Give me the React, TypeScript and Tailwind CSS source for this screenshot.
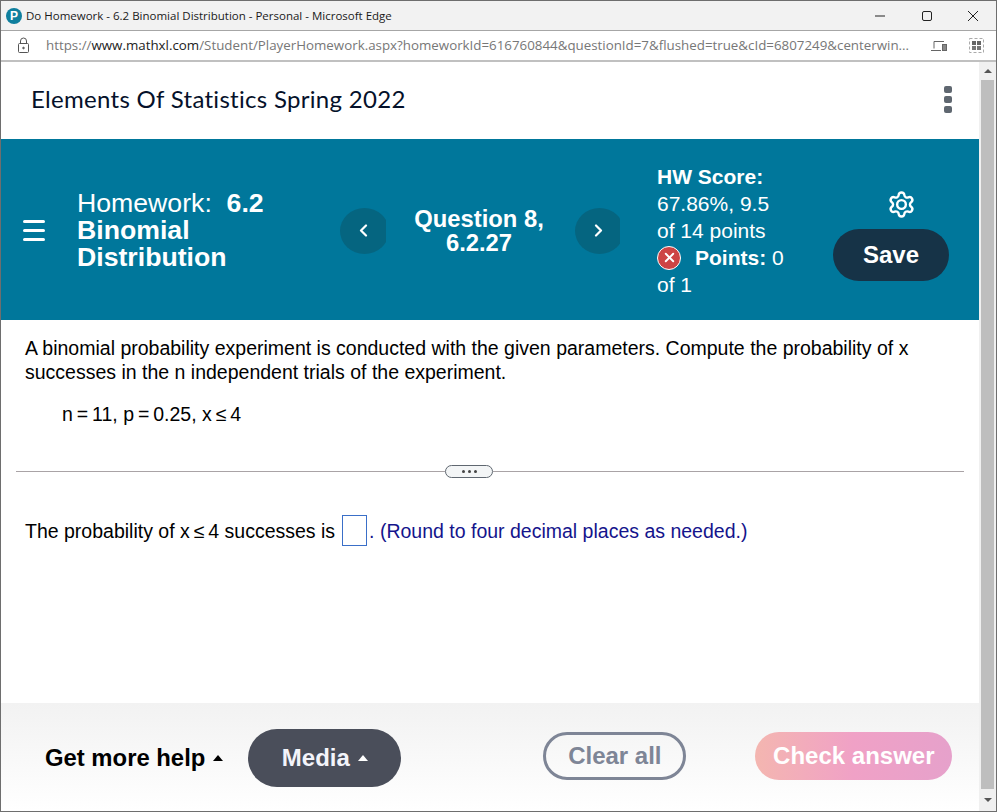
import { X } from "lucide-react";

function Caret({ color }: { color: string }) {
  return <span className={`inline-block w-0 h-0 border-x-[5px] border-x-transparent border-b-[6px] ${color}`} />;
}

function NavCircle({ dir }: { dir: "left" | "right" }) {
  return (
    <div className={dir === "left" ? "w-[46px] h-[46px] shrink-0 overflow-hidden" : "w-[45px] h-[46px] shrink-0 overflow-hidden"}>
      <div className="w-[49px] h-[46px] rounded-[50%] bg-[#056580] flex items-center justify-center pr-[2px]">
        <svg width="9" height="13" viewBox="0 0 9 13" fill="none" stroke="white" strokeWidth="2.2" strokeLinecap="round" strokeLinejoin="round">
          <path d={dir === "left" ? "M7 1.5L2 6.5l5 5" : "M2 1.5l5 5-5 5"} />
        </svg>
      </div>
    </div>
  );
}

function BrowserBars() {
  return (
    <div className="shrink-0 font-['Open_Sans',sans-serif]">
      <div className="h-[30px] bg-[#f2f2f2] border-b border-[#a6a6a6] flex items-center pl-[5px] pr-0">
        <span className="w-[16px] h-[16px] rounded-full bg-[#0f7f9e] text-white text-[12px] font-bold flex items-center justify-center font-['Liberation_Sans',sans-serif]">
          P
        </span>
        <span className="ml-[4px] text-[11.5px] text-[#1a1a1a]">Do Homework - 6.2 Binomial Distribution - Personal - Microsoft Edge</span>
        <div className="ml-auto flex items-center text-[#222]">
          <svg width="12" height="12" viewBox="0 0 12 12" className="mr-[35px]">
            <path d="M1 6h10" stroke="currentColor" strokeWidth="1" />
          </svg>
          <svg width="12" height="12" viewBox="0 0 12 12" className="mr-[34px]">
            <rect x="1.5" y="1.5" width="9" height="9" rx="1.5" fill="none" stroke="currentColor" />
          </svg>
          <svg width="12" height="12" viewBox="0 0 12 12" className="mr-[17px]">
            <path d="M1 1l10 10M11 1L1 11" stroke="currentColor" strokeWidth="1" />
          </svg>
        </div>
      </div>
      <div className="h-[31px] bg-white border-b-2 border-[#c0c0c0] flex items-center pl-[16px]">
        <svg width="14" height="17" viewBox="0 0 14 17" fill="none" stroke="#555" strokeWidth="1">
          <rect x="1.5" y="6.5" width="10" height="9" rx="1" />
          <path d="M3.5 6.5V4a3 3 0 0 1 6 0v2.5" />
          <circle cx="6.5" cy="11" r="0.8" fill="#555" />
        </svg>
        <span className="ml-[15px] text-[13.34px] whitespace-nowrap text-[#777]">
          https://<span className="text-[#222]">www.mathxl.com</span>/Student/PlayerHomework.aspx?homeworkId=616760844&amp;questionId=7&amp;flushed=true&amp;cId=6807249&amp;centerwin...
        </span>
        <div className="ml-auto flex items-center">
          <svg width="16" height="12" viewBox="0 0 16 12" fill="none" stroke="#666" className="mr-[22px]">
            <path d="M3 1.5h10M3 1.5v7M0 10.5h10" />
            <rect x="11.5" y="4.5" width="4" height="6" fill="#888" />
          </svg>
          <svg width="15" height="15" viewBox="0 0 15 15" className="mr-[12px]">
            <rect x="0.5" y="0.5" width="14" height="14" fill="none" stroke="#aaa" strokeDasharray="3 2" />
            <rect x="3" y="3" width="4" height="4" fill="#666" />
            <rect x="8" y="3" width="4" height="4" fill="#666" />
            <rect x="3" y="8" width="4" height="4" fill="#777" />
            <rect x="8" y="8" width="4" height="4" fill="#777" />
          </svg>
        </div>
      </div>
    </div>
  );
}

function HeaderBand() {
  return (
    <div className="h-[181px] shrink-0 pt-[2px] bg-[#00779b] text-white flex items-center font-['Liberation_Sans',sans-serif]">
      <div className="w-[76px] pl-[22px] shrink-0">
        <div className="w-[22px] flex flex-col gap-[6.5px]">
          <div className="h-[2.5px] bg-white rounded-full" />
          <div className="h-[2.5px] bg-white rounded-full" />
          <div className="h-[2.5px] bg-white rounded-full" />
        </div>
      </div>
      <div className="w-[263px] shrink-0 text-[26.67px] leading-[27px]">
        <div>
          Homework:&nbsp; <b>6.2</b>
        </div>
        <b>
          Binomial
          <br />
          Distribution
        </b>
      </div>
      <NavCircle dir="left" />
      <div className="w-[189px] pr-[3px] shrink-0 text-center text-[23.8px] leading-[24px] font-bold mt-[1px]">
        Question 8,
        <br />
        6.2.27
      </div>
      <NavCircle dir="right" />
      <div className="ml-[37px] w-[176px] shrink-0 text-[21px] leading-[27px]">
        <b>HW Score:</b>
        <br />
        67.86%, 9.5
        <br />
        of 14 points
        <br />
        <span className="inline-flex items-center align-middle w-[24px] h-[24px] rounded-full bg-[#cd4444] border border-white justify-center -mt-[3px]">
          <X size={15} strokeWidth={3} />
        </span>
        <b className="ml-[14px]">Points:</b> 0
        <br />
        of 1
      </div>
      <div className="w-[116px] shrink-0 flex flex-col items-center mt-[9px]">
        <svg width="29" height="29" viewBox="0 0 24 24" fill="none" stroke="white" strokeWidth="2" strokeLinecap="round" strokeLinejoin="round" className="ml-[20px]">
          <path d="M9.671 4.136a2.34 2.34 0 0 1 4.659 0 2.34 2.34 0 0 0 3.319 1.915 2.34 2.34 0 0 1 2.33 4.033 2.34 2.34 0 0 0 0 3.831 2.34 2.34 0 0 1-2.33 4.033 2.34 2.34 0 0 0-3.319 1.915 2.34 2.34 0 0 1-4.659 0 2.34 2.34 0 0 0-3.32-1.915 2.34 2.34 0 0 1-2.33-4.033 2.34 2.34 0 0 0 0-3.831A2.34 2.34 0 0 1 6.35 6.051a2.34 2.34 0 0 0 3.32-1.915" />
          <circle cx="12" cy="12" r="3.6" />
        </svg>
        <div className="mt-[10px] w-[116px] h-[52px] rounded-full bg-[#163347] flex items-center justify-center text-[24px] font-bold">
          Save
        </div>
      </div>
    </div>
  );
}

export default function App() {
  return (
    <div className="w-[997px] h-[812px] border border-[#6e6e6e] bg-white flex flex-col overflow-hidden">
      <BrowserBars />
      <div className="flex-1 flex min-h-0">
        <div className="w-[978px] flex flex-col font-['Liberation_Sans',sans-serif]">
          <div className="h-[77px] shrink-0 flex items-center justify-between pl-[30px] pr-[27px] pb-[2px]">
            <span className="text-[24px] text-[#05112a] font-['Lato',sans-serif] tracking-[0.3px] -mt-[2px]">Elements Of Statistics Spring 2022</span>
            <div className="flex flex-col gap-[3px]">
              <div className="w-[8px] h-[7px] rounded-[2px] bg-[#5f6770]" />
              <div className="w-[8px] h-[7px] rounded-[2px] bg-[#5f6770]" />
              <div className="w-[8px] h-[7px] rounded-[2px] bg-[#5f6770]" />
            </div>
          </div>
          <HeaderBand />
          <div className="flex-1 text-[19.5px] leading-[24px] text-black">
            <div className="pl-[24px] pr-[60px] pt-[16px]">
              A binomial probability experiment is conducted with the given parameters. Compute the probability of x successes in the n independent trials of the experiment.
            </div>
            <div className="pl-[61px] mt-[18px]">n{"\u2009"}={"\u2009"}11, p{"\u2009"}={"\u2009"}0.25, x{"\u2009"}≤{"\u2009"}4</div>
            <div className="mt-[39px] ml-[15px] w-[948px] flex items-center">
              <div className="h-px bg-[#a9a3a6] w-[429px]" />
              <div className="w-[48px] h-[13px] rounded-full border border-[#5f6770] bg-[#f3f5f6] flex items-center justify-center gap-[3px]">
                <span className="w-[3px] h-[3px] rounded-full bg-[#444]" />
                <span className="w-[3px] h-[3px] rounded-full bg-[#444]" />
                <span className="w-[3px] h-[3px] rounded-full bg-[#444]" />
              </div>
              <div className="h-px bg-[#a9a3a6] flex-1" />
            </div>
            <div className="pl-[24px] mt-[37px] flex items-center">
              The probability of x{"\u2009"}≤{"\u2009"}4 successes is
              <span className="ml-[7px] w-[25px] h-[31px] border border-[#3a6fc8] inline-block" />
              <span className="ml-[2px] text-[#14148c]">
                . (Round to four decimal places as needed.)
              </span>
            </div>
          </div>
          <div className="h-[108px] shrink-0 pt-[2px] bg-gradient-to-b from-[#f2f2f2] to-white flex items-center pl-[44px]">
            <span className="text-[23.85px] font-bold text-black">Get more help</span>
            <Caret color="border-b-black ml-[8px]" />
            <div className="ml-[25px] w-[153px] h-[58px] rounded-[29px] bg-[#4a4e5a] flex items-center justify-center text-[24px] font-bold text-[#f3f4fa]">
              Media
              <Caret color="border-b-white ml-[8px]" />
            </div>
            <div className="ml-[142px] -mt-[4px] w-[143px] h-[48px] rounded-full border-[3px] border-[#7e8596] flex items-center justify-center text-[24px] font-bold text-[#7e8596]">
              Clear all
            </div>
            <div className="ml-[69px] -mt-[4px] w-[197px] h-[48px] rounded-full bg-gradient-to-r from-[#f4b6b0] via-[#f0a1c6] to-[#e6a1cb] flex items-center justify-center text-[24px] font-bold text-white">
              Check answer
            </div>
          </div>
        </div>
        <div className="w-[17px] shrink-0 bg-[#f0f0f0] flex flex-col items-center">
          <div className="h-[18px] flex items-center">
            <span className="w-0 h-0 border-x-[4px] border-x-transparent border-b-[4px] border-b-[#555]" />
          </div>
          <div className="w-[13px] flex-1 bg-[#bebebe]" />
          <div className="h-[22px] flex items-center">
            <span className="w-0 h-0 border-x-[4px] border-x-transparent border-t-[4px] border-t-[#555]" />
          </div>
        </div>
      </div>
    </div>
  );
}
